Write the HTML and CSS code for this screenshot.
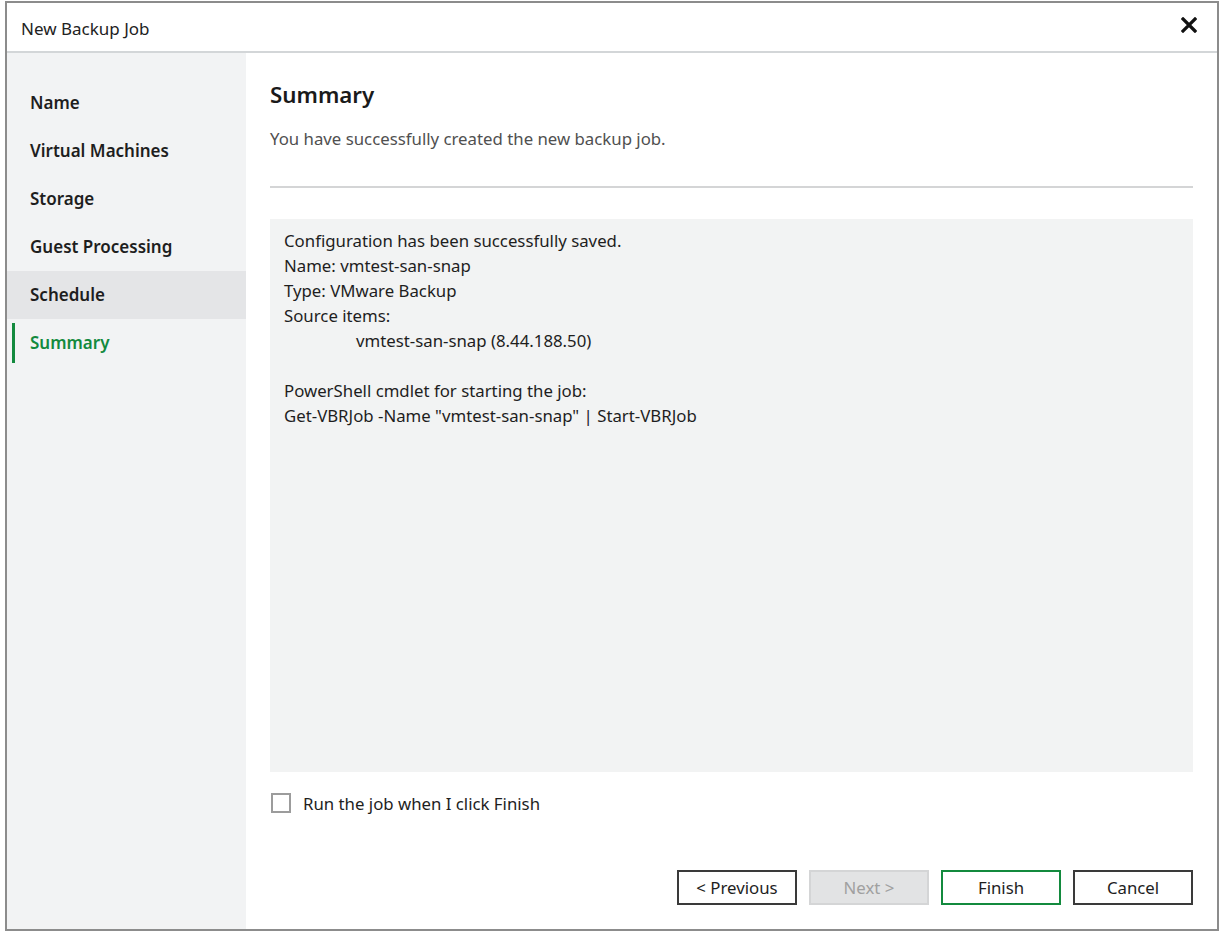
FILE: index.html
```html
<!DOCTYPE html>
<html lang="en">
<head>
  <meta charset="UTF-8" />
  <title>New Backup Job</title>
  <link rel="stylesheet" href="styles.css">
</head>
<body>
  <div class="window">
    <div class="titlebar">
      <span class="title">New Backup Job</span>
      <svg class="close" width="16" height="16" viewBox="0 0 16 16">
        <path d="M2 2 L14 14 M14 2 L2 14" stroke="#111" stroke-width="3.2" stroke-linecap="square" fill="none"/>
      </svg>
    </div>

    <div class="main">
      <ul class="steps">
        <li>Name</li>
        <li>Virtual Machines</li>
        <li>Storage</li>
        <li>Guest Processing</li>
        <li class="hover">Schedule</li>
        <li class="active">Summary</li>
      </ul>

      <div class="content">
        <h1>Summary</h1>
        <p class="lead">You have successfully created the new backup job.</p>
        <div class="divider"></div>

        <div class="summary-box">
          <div>Configuration has been successfully saved.</div>
          <div>Name: vmtest-san-snap</div>
          <div>Type: VMware Backup</div>
          <div>Source items:</div>
          <div class="indent">vmtest-san-snap (8.44.188.50)</div>
          <div>&nbsp;</div>
          <div>PowerShell cmdlet for starting the job:</div>
          <div>Get-VBRJob -Name "vmtest-san-snap" | Start-VBRJob</div>
        </div>

        <label class="check-row">
          <span class="checkbox"></span>
          Run the job when I click Finish
        </label>

        <div class="button-row">
          <button>&lt; Previous</button>
          <button class="disabled">Next &gt;</button>
          <button class="primary">Finish</button>
          <button>Cancel</button>
        </div>
      </div>
    </div>
  </div>
</body>
</html>
```

FILE: styles.css
```css
body {
  margin: 0;
  background-color: #fff;
  font-family: 'Noto Sans', 'Open Sans', sans-serif;
  color: #1e1e1e;
}
.window {
  box-sizing: border-box;
  width: 1214px;
  height: 930px;
  margin: 1px 0 0 5px;
  border: 2px solid #8c8c8c;
  display: flex;
  flex-direction: column;
  background-color: #fff;
}
.titlebar {
  height: 48px;
  flex-shrink: 0;
  display: flex;
  align-items: center;
  justify-content: space-between;
  padding: 0 20px 0 14px;
  border-bottom: 2px solid #d3d6d8;
}
.title {
  font-size: 17px;
  color: #222;
  padding-top: 2px;
}
.close {
  margin-top: -4px;
}
.main {
  flex: 1;
  display: flex;
}
.steps {
  width: 239px;
  flex-shrink: 0;
  margin: 0;
  padding: 26px 0 0;
  list-style: none;
  background-color: #f2f3f4;
}
.steps li {
  height: 48px;
  line-height: 48px;
  padding-left: 23px;
  font-size: 17px;
  font-weight: 600;
  color: #1e1e1e;
}
.steps li.hover {
  background-color: #e4e5e7;
}
.steps li.active {
  color: #138a3e;
  position: relative;
}
.steps li.active::before {
  content: "";
  position: absolute;
  left: 5px;
  top: 4px;
  bottom: 4px;
  width: 3px;
  background-color: #138a3e;
}
.content {
  flex: 1;
  display: flex;
  flex-direction: column;
  padding: 27px 24px 24px;
}
h1 {
  margin: 0;
  font-size: 22.3px;
  line-height: 30px;
  font-weight: 600;
  color: #1a1a1a;
}
.lead {
  margin: 17px 0 0;
  font-size: 16.8px;
  line-height: 24px;
  color: #505050;
}
.divider {
  margin-top: 35px;
  height: 2px;
  background-color: #d4d5d6;
}
.summary-box {
  flex: 1;
  margin-top: 31px;
  padding: 9px 14px;
  background-color: #f2f3f3;
  font-size: 16.8px;
  line-height: 25px;
  color: #1e1e1e;
}
.summary-box .indent {
  padding-left: 72px;
}
.check-row {
  margin-top: 19px;
  height: 24px;
  flex-shrink: 0;
  display: flex;
  align-items: center;
  gap: 12px;
  font-size: 16.8px;
  color: #1e1e1e;
}
.checkbox {
  box-sizing: border-box;
  width: 20px;
  height: 20px;
  margin-left: 1px;
  border: 2px solid #9c9c9c;
  background-color: #fff;
}
.button-row {
  margin-top: 55px;
  flex-shrink: 0;
  display: flex;
  justify-content: flex-end;
  gap: 12px;
}
button {
  box-sizing: border-box;
  width: 120px;
  height: 35px;
  border: 2px solid #3a3a3a;
  background-color: #fff;
  font-family: 'Noto Sans', 'Open Sans', sans-serif;
  font-size: 16.8px;
  color: #1e1e1e;
  padding: 0;
}
button.disabled {
  background-color: #e2e3e4;
  border-color: #d4d5d6;
  color: #a0a0a0;
}
button.primary {
  border-color: #138a3e;
}
```
